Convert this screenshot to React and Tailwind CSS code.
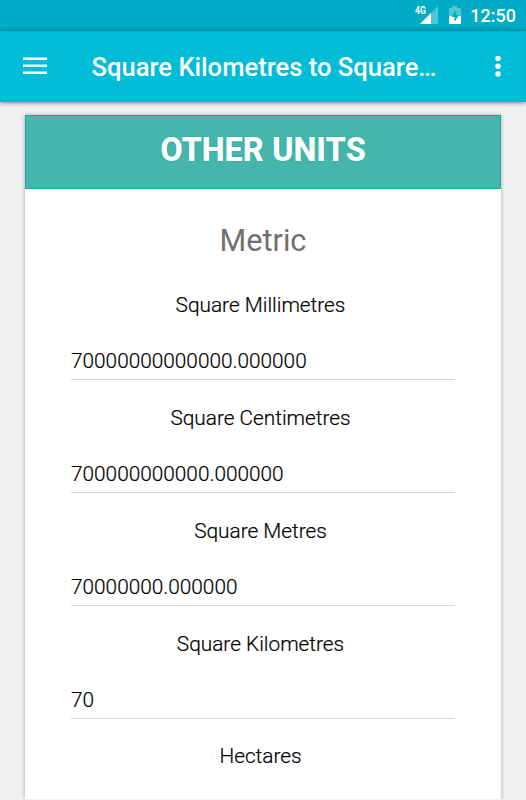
const fields = [
  ['Square Millimetres', '70000000000000.000000'],
  ['Square Centimetres', '700000000000.000000'],
  ['Square Metres', '70000000.000000'],
  ['Square Kilometres', '70'],
  ['Hectares', null],
];

function StatusBar() {
  return (
    <div className="flex h-[30px] shrink-0 items-center justify-end bg-[#00acc6] pr-[10px] text-white">
      <svg className="mr-[10px] h-[30px] w-[24px]" viewBox="0 0 24 30">
        <path d="M24 6V24H6Z" fill="#fff" fillOpacity=".3" />
        <path d="M17 13V24H6Z" fill="#fff" />
        <text x="1" y="14.2" fontSize="11.5" fontWeight="700" fill="#fff" textLength="11" lengthAdjust="spacingAndGlyphs">4G</text>
      </svg>
      <svg className="mr-[9px] h-[30px] w-[13px]" viewBox="0 0 13 30">
        <path d="M4 6H9V8H13V16H1V8H4Z" fill="#fff" fillOpacity=".3" />
        <path d="M1 16H13V24H1Z" fill="#fff" />
        <path d="M8 10L3.5 17H6.5V22L11 15H8Z" fill="#00acc6" />
      </svg>
      <span className="mt-[2px] text-[18px] leading-[26px] font-medium">12:50</span>
    </div>
  );
}

function AppBar() {
  return (
    <header className="relative flex h-[72px] shrink-0 items-center bg-[#00bcd7] px-[23px] text-white shadow-[0_1px_4px_rgba(0,0,0,.45),inset_0_1px_1px_rgba(0,80,90,.4)]">
      <svg className="h-[18px] w-[24px] shrink-0" viewBox="0 0 24 18" fill="#fff">
        <path d="M0 .4H24V3H0ZM0 7.4H24V10H0ZM0 14.4H24V17H0Z" />
      </svg>
      <h1 className="mt-[2px] ml-[44.5px] grow text-[25.6px] font-medium whitespace-nowrap">Square Kilometres to Square…</h1>
      <svg className="h-[22px] w-[10px] shrink-0" viewBox="0 0 10 22" fill="#fff">
        <circle cx="5" cy="3.4" r="2.7" /><circle cx="5" cy="11.2" r="2.7" /><circle cx="5" cy="19" r="2.7" />
      </svg>
    </header>
  );
}

export default function App() {
  return (
    <div className="flex h-[800px] w-[526px] flex-col overflow-hidden bg-[#f0f0f0] pb-px font-[Roboto,sans-serif]">
      <StatusBar />
      <AppBar />
      <main className="mx-[25px] mt-[13px] min-h-0 grow bg-white shadow-[0_0_4px_rgba(0,0,0,.3)]">
        <h2 className="flex h-[74px] items-center justify-center border border-[#13ab9d] bg-[#47b5ab] pb-[4px] text-[32.5px] font-extrabold text-white [text-shadow:0_0_2px_#13ab9d]">OTHER UNITS</h2>
        <h3 className="mt-[32px] text-center text-[30.6px] leading-[40px] text-[#707070]">Metric</h3>
        <div className="mt-[29px] px-[46px] text-[20.8px] leading-[30px] font-light text-black [-webkit-text-stroke:0.2px_#000]">
          {fields.map(([label, value]) => (
            <div key={label} className={value ? 'h-[112.85px]' : 'h-[30px]'}>
              <div className="pr-[5px] text-center">{label}</div>
              {value && <div className="mt-[26px] h-[34px] border-b border-[#d9d9d9]">{value}</div>}
            </div>
          ))}
        </div>
      </main>
      <div className="fixed inset-x-0 bottom-0 h-px bg-[#f0f0f0]" />
    </div>
  );
}
